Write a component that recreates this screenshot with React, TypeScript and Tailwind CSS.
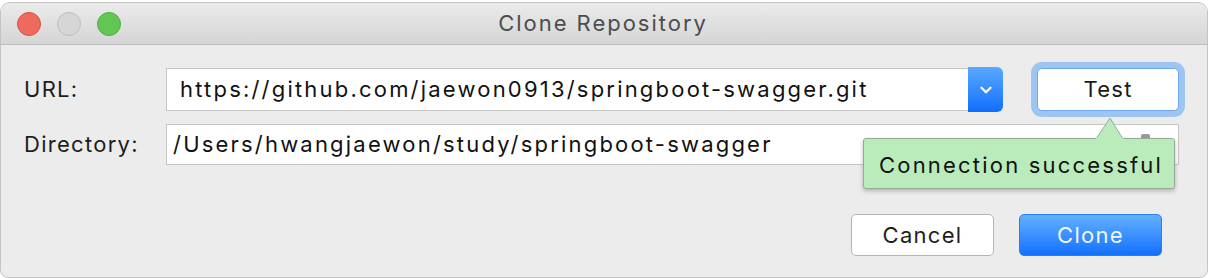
import { ChevronDown } from "lucide-react";

const font = { fontFamily: '"Inter", "Liberation Sans", sans-serif' };

function TrafficLights() {
  return (
    <div className="flex items-center gap-[16px] pl-[16px]">
      <span className="w-[24px] h-[24px] rounded-full bg-[#ee6a5e] border border-[#d65247]" />
      <span className="w-[24px] h-[24px] rounded-full bg-[#d6d6d6] border border-[#bcbcbc]" />
      <span className="w-[24px] h-[24px] rounded-full bg-[#62c654] border border-[#4fae43]" />
    </div>
  );
}

export default function App() {
  return (
    <div className="w-[1212px] h-[278px] bg-white pt-[2px] overflow-hidden tracking-[0.08em]" style={font}>
      <div className="relative w-[1208px] h-[276px] bg-[#ececec] rounded-t-[10px] rounded-b-[8px] border border-[#c4c4c4] overflow-hidden">
        {/* title bar */}
        <div className="relative h-[42px] flex items-center bg-gradient-to-b from-[#ebebeb] to-[#d5d5d5] border-b border-[#bdbdbd]">
          <TrafficLights />
          <div className="absolute inset-0 flex items-center justify-center text-[22px] tracking-[0.09em] text-[#4d4d4d] pr-[2px]">
            Clone Repository
          </div>
        </div>

        <div className="px-[23px]">
          {/* URL row */}
          <div className="mt-[22px] h-[45px] flex items-center">
            <div className="w-[142px] text-[22px] text-[#1e1e1e]">URL:</div>
            <div className="flex h-[45px] items-center">
              <div className="w-[802px] h-[43px] bg-white border border-[#c6c6c6] border-r-0 flex items-center pl-[13px] text-[22px] tracking-[0.1em] text-[#111] whitespace-nowrap overflow-hidden">
                https://github.com/jaewon0913/springboot-swagger.git
              </div>
              <div className="w-[35px] h-[45px] rounded-r-[6px] bg-gradient-to-b from-[#59a9ff] to-[#0d6dfd] flex items-center justify-center">
                <ChevronDown className="w-[18px] h-[18px] text-white" strokeWidth={3} />
              </div>
            </div>
            <div className="ml-[34px] w-[142px] h-[43px] rounded-[5px] bg-white border border-[#6ea8ee] ring-[6px] ring-[#9cc5f2] flex items-center justify-center text-[22px] text-[#1a1a1a]">
              Test
            </div>
          </div>

          {/* Directory row */}
          <div className="mt-[12px] h-[41px] flex items-center">
            <div className="w-[142px] text-[22px] text-[#1e1e1e]">Directory:</div>
            <div className="relative w-[1013px] h-[41px] bg-white border border-[#c6c6c6] flex items-center pl-[6px] text-[22px] tracking-[0.1em] text-[#111] whitespace-nowrap">
              /Users/hwangjaewon/study/springboot-swagger
              <span className="absolute left-[974px] top-[9px] w-[9px] h-[12px] rounded-[2px] bg-[#9b9b9b]" />
            </div>
          </div>

          {/* buttons */}
          <div className="mt-[49px] flex justify-end gap-[25px] pr-[22px]">
            <div className="w-[143px] h-[42px] rounded-[5px] bg-white border border-[#b4b4b4] flex items-center justify-center text-[22px] text-[#1e1e1e]">
              Cancel
            </div>
            <div className="w-[143px] h-[42px] rounded-[5px] bg-gradient-to-b from-[#62b0ff] to-[#0f6ffe] border border-[#2a7ef0] flex items-center justify-center text-[22px] text-[#f2f6ff]">
              Clone
            </div>
          </div>
        </div>

        {/* tooltip */}
        <div className="absolute left-[862px] top-[135px]">
          <svg className="absolute left-[232px] top-[-21px]" width="30" height="23" viewBox="0 0 30 23">
            <polygon points="1,22 15,1 28,22" fill="#baecbb" stroke="#9aa89a" strokeWidth="1" />
          </svg>
          <div className="w-[312px] h-[51px] rounded-[3px] bg-[#baecbb] border border-[#9aa89a] shadow-[0_2px_4px_rgba(0,0,0,0.25)] flex items-center pl-[15px] pt-[3px] text-[22px] tracking-[0.1em] text-[#111] whitespace-nowrap">
            Connection successful
          </div>
          <div className="absolute left-[233px] top-[0px] w-[27px] h-[2px] bg-[#baecbb]" />
        </div>
      </div>
    </div>
  );
}
